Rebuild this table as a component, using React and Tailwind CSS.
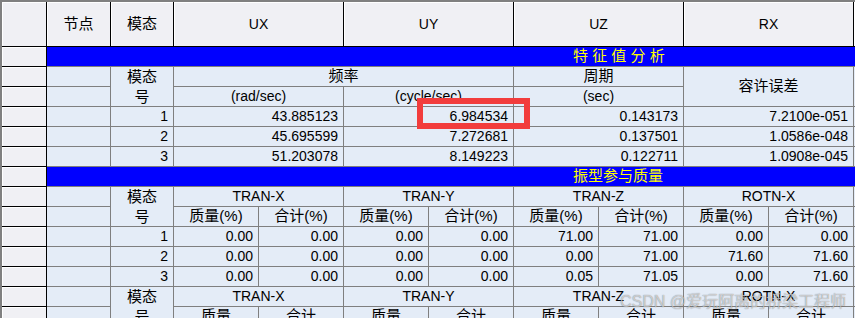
import React from "react";

// Spreadsheet-style result grid: eigenvalue analysis + modal mass participation.

function RowHead() {
  return (
    <div className="bg-[#f0f0f4] border-r border-b border-black shadow-[inset_1px_1px_0_#ffffff]" />
  );
}

function Head({ children, className = "" }) {
  return (
    <div
      className={`flex items-center justify-center bg-[#f0f0f4] border-r border-b border-black shadow-[inset_1px_1px_0_#ffffff] text-[14px] text-black whitespace-nowrap overflow-hidden ${className}`}
    >
      {children}
    </div>
  );
}

function Cell({ children, className = "" }) {
  return (
    <div
      className={`flex items-center justify-end pr-[5px] bg-[#e4ecf7] border-r border-b border-[#7f7f7f] text-[14px] text-black whitespace-nowrap overflow-hidden ${className}`}
    >
      {children}
    </div>
  );
}

function Label({ children, className = "" }) {
  return (
    <div
      className={`flex items-center justify-center bg-[#e4ecf7] border-r border-b border-[#7f7f7f] text-[14px] text-black whitespace-nowrap overflow-hidden ${className}`}
    >
      {children}
    </div>
  );
}

function Band({ children }) {
  return (
    <div className="col-span-12 flex items-center bg-[#0000ff] border-b border-[#7f7f7f] pl-[526px] text-[15px] text-[#ffff00] whitespace-pre">
      {children}
    </div>
  );
}

function ModeNo() {
  return (
    <div className="row-span-2 flex flex-col items-center bg-[#e4ecf7] border-r border-b border-[#7f7f7f] text-[15px] text-black">
      <span className="leading-[20px]">模态</span>
      <span className="leading-[20px]">号</span>
    </div>
  );
}

const freq = [
  ["1", "43.885123", "6.984534", "0.143173", "7.2100e-051"],
  ["2", "45.695599", "7.272681", "0.137501", "1.0586e-048"],
  ["3", "51.203078", "8.149223", "0.122711", "1.0908e-045"],
];

const mass = [
  ["1", "0.00", "0.00", "0.00", "0.00", "71.00", "71.00", "0.00", "0.00"],
  ["2", "0.00", "0.00", "0.00", "0.00", "0.00", "71.00", "71.60", "71.60"],
  ["3", "0.00", "0.00", "0.00", "0.00", "0.05", "71.05", "0.00", "71.60"],
];

const dirs = ["TRAN-X", "TRAN-Y", "TRAN-Z", "ROTN-X"];

function MassHeader({ short }) {
  return (
    <>
      <RowHead />
      <Cell />
      <ModeNo />
      {dirs.map((d) => (
        <Label key={d} className="col-span-2">
          {d}
        </Label>
      ))}
      <Label className="col-span-2" />
      <RowHead />
      <Cell />
      {dirs.map((d) => (
        <React.Fragment key={d}>
          <Label className="text-[15px]">{short ? "质量" : "质量(%)"}</Label>
          <Label className="text-[15px]">{short ? "合计" : "合计(%)"}</Label>
        </React.Fragment>
      ))}
      <Label />
      <Label />
    </>
  );
}

export default function App() {
  return (
    <div className="relative w-[855px] h-[318px] overflow-hidden border-l-2 border-t-2 border-[#808080] bg-[#f0f0f4] font-['Liberation_Sans','Noto_Sans_CJK_SC',sans-serif]">
      <div className="grid grid-cols-[45px_64px_63px_repeat(10,85px)] grid-rows-[45px_repeat(14,20px)]">
        {/* column headers */}
        <RowHead />
        <Head className="text-[15px]">节点</Head>
        <Head className="text-[15px]">模态</Head>
        <Head className="col-span-2">UX</Head>
        <Head className="col-span-2">UY</Head>
        <Head className="col-span-2">UZ</Head>
        <Head className="col-span-2">RX</Head>
        <Head className="col-span-2" />

        {/* eigenvalue analysis */}
        <RowHead />
        <Band>特 征 值 分 析</Band>

        <RowHead />
        <Cell />
        <ModeNo />
        <Label className="col-span-4 text-[15px]">频率</Label>
        <Label className="col-span-2 text-[15px]">周期</Label>
        <Label className="col-span-2 row-span-2 text-[15px]">容许误差</Label>
        <Label className="col-span-2 row-span-2" />

        <RowHead />
        <Cell />
        <Label className="col-span-2">(rad/sec)</Label>
        <Label className="col-span-2">(cycle/sec)</Label>
        <Label className="col-span-2">(sec)</Label>

        {freq.map((r) => (
          <React.Fragment key={r[0]}>
            <RowHead />
            <Cell />
            <Cell>{r[0]}</Cell>
            <Cell className="col-span-2">{r[1]}</Cell>
            <Cell className="col-span-2">{r[2]}</Cell>
            <Cell className="col-span-2">{r[3]}</Cell>
            <Cell className="col-span-2">{r[4]}</Cell>
            <Cell className="col-span-2" />
          </React.Fragment>
        ))}

        {/* modal participating mass */}
        <RowHead />
        <Band>振型参与质量</Band>

        <MassHeader />

        {mass.map((r) => (
          <React.Fragment key={r[0]}>
            <RowHead />
            <Cell />
            {r.map((v, i) => (
              <Cell key={i}>{v}</Cell>
            ))}
            <Cell />
            <Cell />
          </React.Fragment>
        ))}

        <MassHeader short />
      </div>

      {/* highlight box */}
      <div className="absolute left-[415px] top-[96px] w-[113px] h-[31px] border-[6px] border-[#f23c3c]" />

      {/* author mark */}
      <div className="absolute left-[618px] top-[288px] text-[16px] text-white/60 whitespace-nowrap [text-shadow:0_0_1px_rgba(0,0,0,0.55)]">
        CSDN @爱玩阿离的桥梁工程师
      </div>
    </div>
  );
}
